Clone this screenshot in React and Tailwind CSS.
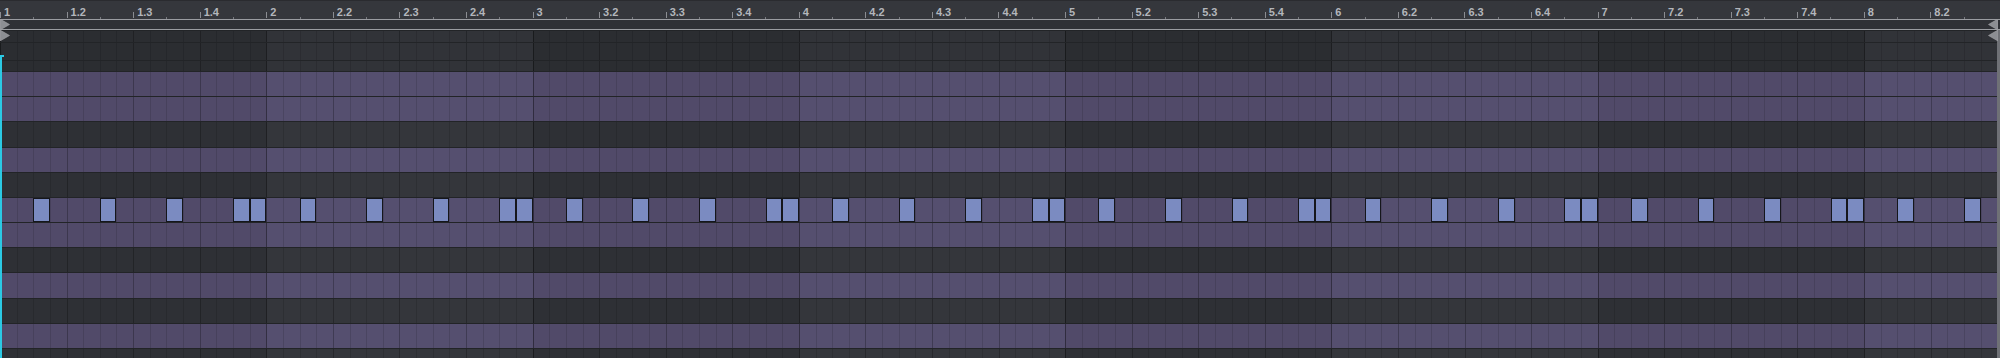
const BAR = 266.3;
const BEATS = 30;
const NOTE_STEPS = [2, 6, 10, 14, 15];

// rows below the loop lane, top to bottom
const ROWS = [
  { h: 12, kind: "top" },
  { h: 18, kind: "top" },
  { h: 11, kind: "top" },
  { h: 25.18, kind: "white" },
  { h: 25.18, kind: "white" },
  { h: 25.18, kind: "black" },
  { h: 25.18, kind: "white" },
  { h: 25.18, kind: "black" },
  { h: 25.18, kind: "white", notes: true },
  { h: 25.18, kind: "white" },
  { h: 25.18, kind: "black" },
  { h: 25.18, kind: "white" },
  { h: 25.18, kind: "black" },
  { h: 25.18, kind: "white" },
  { h: 12, kind: "black" },
];

function barColor(kind, bar) {
  const even = bar % 2 === 1;
  if (kind === "white") return even ? "bg-[#554f6f]" : "bg-[#514a69]";
  if (kind === "top") return even ? "bg-[#313338]" : "bg-[#2b2d31]";
  return even ? "bg-[#34363b]" : "bg-[#2e3035]";
}

function Bar({ kind, bar, notes }) {
  return (
    <div className={`flex h-full w-[266.3px] shrink-0 ${barColor(kind, bar)}`}>
      {Array.from({ length: 16 }, (_, i) => {
        const line =
          i === 0 ? "border-black/40" : i % 4 === 0 ? "border-black/25" : "border-black/12";
        return (
          <div key={i} className={`flex-1 border-l ${line}`}>
            {notes && NOTE_STEPS.includes(i) && (
              <div className="h-full w-[calc(100%+1px)] -ml-px border-[1.5px] border-[#15161b] bg-[#7b8bc1]" />
            )}
          </div>
        );
      })}
    </div>
  );
}

function Row({ h, kind, notes }) {
  return (
    <div className="flex shrink-0 border-t border-black/25" style={{ height: h }}>
      {Array.from({ length: 8 }, (_, b) => (
        <Bar key={b} kind={kind} bar={b} notes={notes} />
      ))}
    </div>
  );
}

function Ruler() {
  return (
    <div className="flex h-[19px] shrink-0 border-t border-[#2a2b2f] bg-[#35373c] font-['Liberation_Sans',Arial,sans-serif] text-[11px] leading-none text-[#b3b6bb]">
      {Array.from({ length: BEATS }, (_, b) => {
        const bar = Math.floor(b / 4) + 1;
        const sub = (b % 4) + 1;
        const label = sub === 1 ? `${bar}` : `${bar}.${sub}`;
        return (
          <div key={b} className="flex w-[66.575px] shrink-0 items-end">
            <div className="flex h-full w-1/2 items-end">
              <div className="mb-[1px] h-[6px] w-px bg-[#8b8d92]" />
              <span className="ml-[3px] pb-[1px] font-bold">{label}</span>
            </div>
            <div className="flex h-full w-1/2 items-end">
              <div className="h-[2px] w-px bg-[#77797e]" />
            </div>
          </div>
        );
      })}
    </div>
  );
}

function Arrow({ dir }) {
  return (
    <svg width="10" height="11" viewBox="0 0 10 11" className="block">
      {dir === "right" ? (
        <path d="M0 0 L9.5 5.5 L0 11 Z" fill="#8c8e93" stroke="#a4a6aa" strokeWidth="0.6" />
      ) : (
        <path d="M10 0 L0.5 5.5 L10 11 Z" fill="#8c8e93" stroke="#a4a6aa" strokeWidth="0.6" />
      )}
    </svg>
  );
}

export default function App() {
  return (
    <div className="flex h-[358px] w-[2000px] flex-col overflow-hidden bg-[#2e3035]">
      <Ruler />

      {/* loop brace */}
      <div className="relative h-[11px] shrink-0 border-y border-[#9a9ca1] bg-[#2f3136]">
        <div className="absolute -top-px left-0">
          <Arrow dir="right" />
        </div>
        <div className="absolute -top-px right-[2px]">
          <Arrow dir="left" />
        </div>
      </div>

      <div className="relative flex min-h-0 flex-1">
        <div className="flex min-w-0 flex-1 flex-col overflow-hidden">
          {ROWS.map((r, i) => (
            <Row key={i} {...r} />
          ))}
        </div>
        <div className="w-[3px] shrink-0 bg-[#6f7176]" />

        {/* second brace markers */}
        <div className="absolute left-0 top-0">
          <Arrow dir="right" />
        </div>
        <div className="absolute right-[2px] top-0">
          <Arrow dir="left" />
        </div>

        {/* playhead */}
        <div className="absolute bottom-0 left-0 top-[25px] w-[2px] bg-[#2bc9e4]" />
        <div className="absolute left-0 top-[25px] h-[2px] w-[4px] bg-[#2bc9e4]" />
      </div>
    </div>
  );
}
